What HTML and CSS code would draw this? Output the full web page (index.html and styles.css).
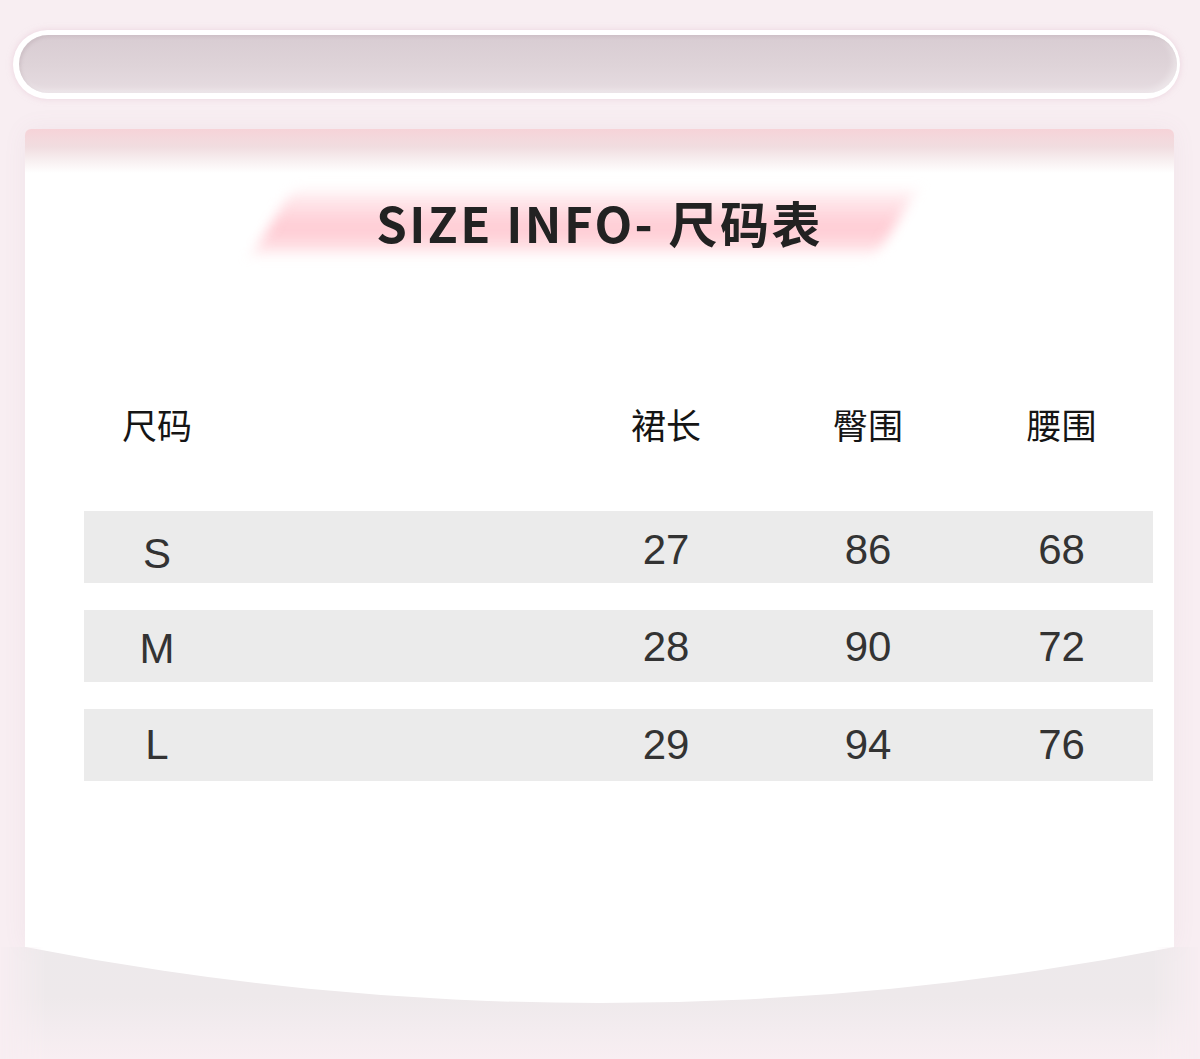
FILE: index.html
```html
<!DOCTYPE html>
<html lang="zh-CN">
<head>
<meta charset="utf-8">
<title>SIZE INFO - 尺码表</title>
<link rel="stylesheet" href="styles.css">
</head>
<body>
<div class="page">
  <div class="pill"><div class="pill-inner"></div></div>
  <div class="card">
    <div class="card-body">
      <div class="title-wrap">
        <h1 class="title">SIZE INFO- 尺码表</h1>
      </div>
      <div class="table">
        <div class="row head">
          <div class="cell c1">尺码</div><div class="cell spacer"></div>
          <div class="cell">裙长</div><div class="cell">臀围</div><div class="cell">腰围</div>
        </div>
        <div class="row data">
          <div class="cell c1 s">S</div><div class="cell spacer"></div>
          <div class="cell">27</div><div class="cell">86</div><div class="cell">68</div>
        </div>
        <div class="row data">
          <div class="cell c1 m">M</div><div class="cell spacer"></div>
          <div class="cell">28</div><div class="cell">90</div><div class="cell">72</div>
        </div>
        <div class="row data">
          <div class="cell c1 l">L</div><div class="cell spacer"></div>
          <div class="cell">29</div><div class="cell">94</div><div class="cell">76</div>
        </div>
      </div>
    </div>
    <div class="card-foot"></div>
  </div>
</div>
</body>
</html>
```
FILE: styles.css
```css
* { box-sizing: border-box; }
html, body { margin: 0; padding: 0; }
body {
  background: #f8eef2;
  width: 1200px;
  height: 1059px;
  overflow: hidden;
}
.page {
  padding-top: 30px;
}
.pill {
  margin-left: 13px;
  width: 1167px;
  height: 69px;
  padding: 5px 3px 6px 6px;
  background: #fff;
  border-radius: 40px;
  box-shadow: 0 0 6px rgba(225, 190, 205, 0.55);
}
.pill-inner {
  height: 100%;
  border-radius: 30px;
  background: linear-gradient(to bottom, #d8ccd2 0%, #ded3d8 50%, #e6dce1 100%);
  box-shadow: inset 2px 2px 3px rgba(170, 150, 160, 0.25), inset -4px -3px 6px rgba(255, 255, 255, 0.35);
}
.card {
  margin-top: 30px;
  margin-left: 25px;
  width: 1149px;
}
.card-body {
  height: 818px;
  background: linear-gradient(to bottom, #f6d3d8 0px, #f1dde0 18px, #f8f0f1 32px, #ffffff 44px, #ffffff 100%);
  border-radius: 6px 6px 0 0;
  padding: 63px 21px 0 59px;
  box-shadow: 0 0 24px rgba(150, 120, 135, 0.07);
}
.title-wrap {
  display: flex;
  justify-content: center;
  margin-left: -38px;
}
.title {
  position: relative;
  margin: 0;
  height: 60px;
  line-height: 60px;
  font-family: "Noto Sans CJK SC", "Noto Sans", sans-serif;
  font-weight: 700;
  font-size: 49px;
  letter-spacing: 2.4px;
  color: #222222;
  z-index: 0;
}
.title::before {
  content: "";
  position: absolute;
  left: -104px;
  right: -74px;
  top: 0px;
  bottom: 0px;
  transform: skewX(-30deg);
  background: linear-gradient(to bottom, rgba(255, 210, 217, 0.35) 0%, rgba(255, 196, 205, 0.9) 60%, rgba(255, 200, 208, 0.5) 100%);
  filter: blur(7px);
  z-index: -1;
}
.table {
  margin-top: 152px;
  width: 1069px;
}
.row {
  display: grid;
  grid-template-columns: 146px 336px 200px 204px 183px;
  align-items: center;
}
.cell {
  text-align: center;
}
.head {
  height: 40px;
  margin-bottom: 67px;
  font-family: "Noto Sans CJK SC", sans-serif;
  font-size: 35px;
  line-height: 40px;
  color: #151515;
}
.data {
  height: 72px;
  margin-bottom: 27px;
  background: #ebebeb;
  font-family: "Liberation Sans", Arial, sans-serif;
  font-size: 42px;
  line-height: 70px;
  color: #333333;
}
.data + .data + .data { margin-top: 1px; }
.data .s { padding-top: 8px; }
.data .m { padding-top: 4px; }
.data .l { padding-top: 0; }
.card-foot {
  position: relative;
  margin: 0 -25px;
  height: 112px;
  overflow: hidden;
  background: linear-gradient(to bottom, #ede9eb 0px, #eee9eb 50px, #f3ecef 82px, #f8eef2 112px);
  -webkit-mask-image: linear-gradient(to right, transparent 0px, #000 45px, #000 calc(100% - 45px), transparent 100%);
  mask-image: linear-gradient(to right, transparent 0px, #000 45px, #000 calc(100% - 45px), transparent 100%);
}
.card-foot::before {
  content: "";
  position: absolute;
  left: 50%;
  top: -5894px;
  width: 5950px;
  height: 5950px;
  margin-left: -2975px;
  border-radius: 50%;
  background: #ffffff;
}
```
